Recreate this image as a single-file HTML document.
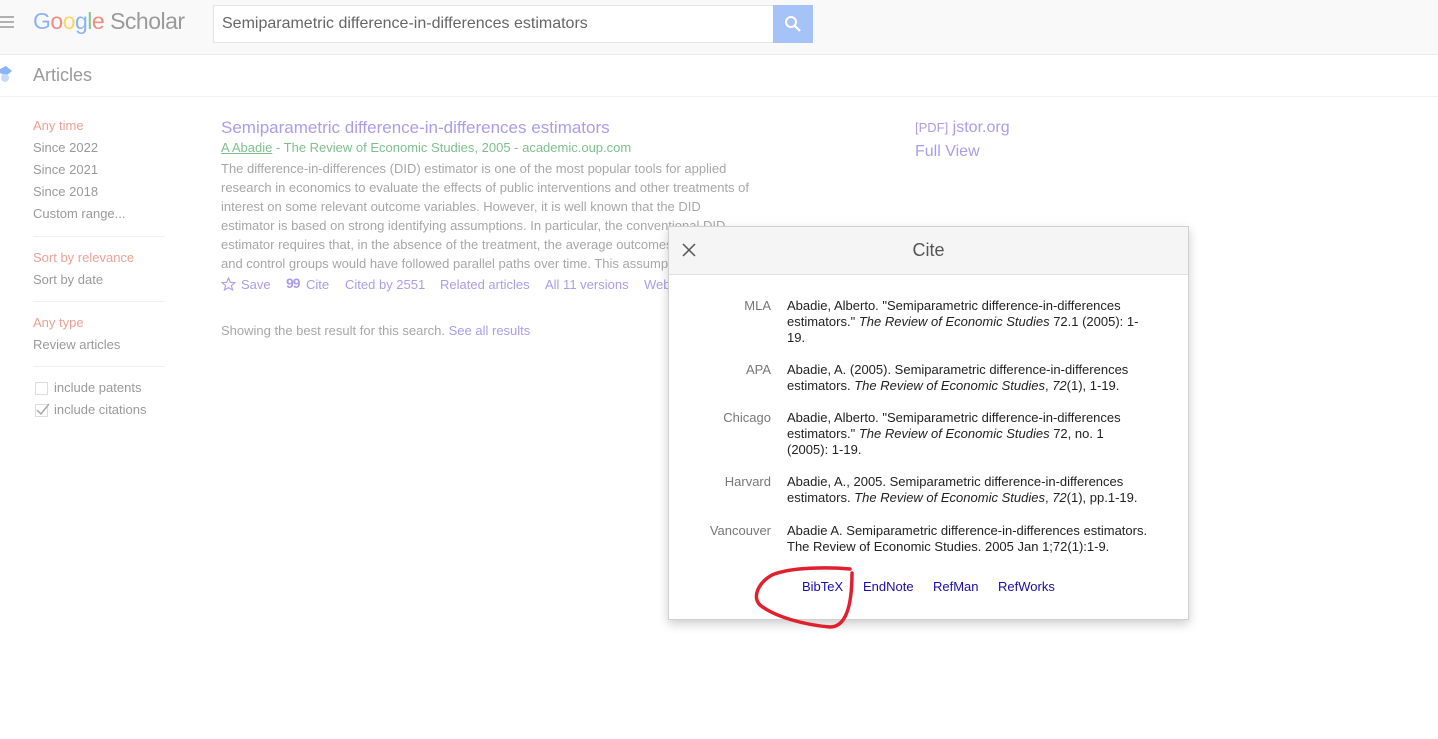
<!DOCTYPE html>
<html><head><meta charset="utf-8"><style>
*{margin:0;padding:0;box-sizing:border-box}
body{width:1438px;height:739px;overflow:hidden;background:#fff;font-family:"Liberation Sans",Arial,sans-serif;position:relative;font-size:13px}
.a{position:absolute;white-space:nowrap}
.hdr{position:absolute;left:0;top:0;width:1438px;height:55px;background:#f9f9f9;border-bottom:1px solid #ececec}
.sub{position:absolute;left:0;top:55px;width:1438px;height:42px;border-bottom:1px solid #f0f0f0}
.side{color:#9a9a9a;font-size:13px}
.red{color:#eda196}
.hr{position:absolute;left:33px;width:132px;height:1px;background:#f0f0f0}
.snip{position:absolute;left:221px;top:159px;width:531px;color:#a7a7a7;line-height:19px;font-size:13px}
.lk{color:#a99ee9}
.dlg{position:absolute;left:668px;top:226px;width:521px;height:394px;background:#fff;border:1px solid #d0d0d0;box-shadow:0 4px 10px rgba(0,0,0,.2)}
.dh{height:48px;background:#f5f5f5;border-bottom:1px solid #e0e0e0;text-align:center;font-size:18px;color:#555;line-height:46px}
.row{position:absolute;left:0;width:521px;line-height:16px;color:#222;font-size:13px}
.row .l{position:absolute;left:0;width:102px;text-align:right;color:#777}
.row .t{position:absolute;left:118px;width:354px}
.bl{position:absolute;top:352px;color:#1a0dab;font-size:13px}
</style></head><body>
<div class="hdr"></div>
<svg style="position:absolute;left:0;top:16px" width="14" height="12"><path d="M0 1H14M0 6H14M0 11H14" stroke="#999" stroke-width="1.5"/></svg>
<div class="a" style="left:33px;top:8px;font-size:23px;letter-spacing:-0.5px"><span style="color:#8ab4f8">G</span><span style="color:#f28b82">o</span><span style="color:#fdd663">o</span><span style="color:#8ab4f8">g</span><span style="color:#81c995">l</span><span style="color:#f28b82">e</span><span style="color:#9a9a9a"> Scholar</span></div>
<div style="position:absolute;left:213px;top:5px;width:561px;height:38px;background:#fff;border:1px solid #e5e5e5"></div>
<div class="a" style="left:222px;top:15px;font-size:16px;color:#666">Semiparametric difference-in-differences estimators</div>
<div style="position:absolute;left:773px;top:5px;width:40px;height:38px;background:#a6c3f7"></div>
<svg style="position:absolute;left:784px;top:15px" width="18" height="18"><circle cx="7" cy="7" r="5" fill="none" stroke="#fff" stroke-width="2"/><line x1="11" y1="11" x2="16" y2="16" stroke="#fff" stroke-width="2.2"/></svg>
<div class="sub"></div>
<svg style="position:absolute;left:0;top:66px" width="14" height="18"><polygon points="0,3 6,0 12,5 6,10 0,7" fill="#8ab4f8"/><circle cx="5" cy="12" r="4" fill="#c6dafc"/></svg>
<div class="a" style="left:33px;top:65px;font-size:18px;color:#9a9a9a">Articles</div>

<div class="a side red" style="left:33px;top:118px">Any time</div>
<div class="a side" style="left:33px;top:140px">Since 2022</div>
<div class="a side" style="left:33px;top:162px">Since 2021</div>
<div class="a side" style="left:33px;top:184px">Since 2018</div>
<div class="a side" style="left:33px;top:206px">Custom range...</div>
<div class="hr" style="top:236px"></div>
<div class="a side red" style="left:33px;top:250px">Sort by relevance</div>
<div class="a side" style="left:33px;top:272px">Sort by date</div>
<div class="hr" style="top:301px"></div>
<div class="a side red" style="left:33px;top:315px">Any type</div>
<div class="a side" style="left:33px;top:337px">Review articles</div>
<div class="hr" style="top:366px"></div>
<div style="position:absolute;left:35px;top:382px;width:13px;height:13px;border:1px solid #ddd"></div>
<div class="a side" style="left:54px;top:380px">include patents</div>
<div style="position:absolute;left:35px;top:404px;width:13px;height:13px;border:1px solid #ddd"></div>
<svg style="position:absolute;left:35px;top:401px" width="16" height="16"><path d="M2 9L6 13L14 3" fill="none" stroke="#aaa" stroke-width="1.5"/></svg>
<div class="a side" style="left:54px;top:402px">include citations</div>

<div class="a" style="left:221px;top:118px;font-size:17px;color:#a99ee9">Semiparametric difference-in-differences estimators</div>
<div class="a" style="left:221px;top:140px;color:#7fbf8e"><u>A Abadie</u> - The Review of Economic Studies, 2005 - academic.oup.com</div>
<div class="snip">The difference-in-differences (DID) estimator is one of the most popular tools for applied research in economics to evaluate the effects of public interventions and other treatments of interest on some relevant outcome variables. However, it is well known that the DID estimator is based on strong identifying assumptions. In particular, the conventional DID estimator requires that, in the absence of the treatment, the average outcomes for treated and control groups would have followed parallel paths over time. This assumption</div>
<svg style="position:absolute;left:221px;top:277px" width="15" height="14"><polygon points="7.5,1 9.3,5.3 14,5.6 10.4,8.6 11.6,13 7.5,10.6 3.4,13 4.6,8.6 1,5.6 5.7,5.3" fill="none" stroke="#a99ee9" stroke-width="1.1"/></svg>
<div class="a lk" style="left:241px;top:277px">Save</div>
<div class="a lk" style="left:286px;top:275px;font-size:14px;font-weight:bold;letter-spacing:-1px">99</div>
<div class="a lk" style="left:306px;top:277px">Cite</div>
<div class="a lk" style="left:345px;top:277px">Cited by 2551</div>
<div class="a lk" style="left:440px;top:277px">Related articles</div>
<div class="a lk" style="left:545px;top:277px">All 11 versions</div>
<div class="a lk" style="left:644px;top:277px">Web of Science</div>
<div class="a" style="left:221px;top:323px;color:#a7a7a7">Showing the best result for this search. <span class="lk">See all results</span></div>
<div class="a" style="left:915px;top:119px;font-size:16px;color:#a99ee9"><span style="font-size:13px">[PDF]</span> jstor.org</div>
<div class="a" style="left:915px;top:143px;font-size:16px;color:#a99ee9">Full View</div>

<div class="dlg">
<div class="dh">Cite</div>
<svg style="position:absolute;left:13px;top:16px" width="14" height="14"><path d="M1 1L13 13M13 1L1 13" stroke="#555" stroke-width="1.5"/></svg>
<div class="row" style="top:71px"><span class="l">MLA</span><span class="t">Abadie, Alberto. "Semiparametric difference-in-differences estimators." <i>The Review of Economic Studies</i> 72.1 (2005): 1-19.</span></div>
<div class="row" style="top:135px"><span class="l">APA</span><span class="t">Abadie, A. (2005). Semiparametric difference-in-differences estimators. <i>The Review of Economic Studies</i>, <i>72</i>(1), 1-19.</span></div>
<div class="row" style="top:183px"><span class="l">Chicago</span><span class="t">Abadie, Alberto. "Semiparametric difference-in-differences estimators." <i>The Review of Economic Studies</i> 72, no. 1 (2005): 1-19.</span></div>
<div class="row" style="top:247px"><span class="l">Harvard</span><span class="t" style="width:362px">Abadie, A., 2005. Semiparametric difference-in-differences estimators. <i>The Review of Economic Studies</i>, <i>72</i>(1), pp.1-19.</span></div>
<div class="row" style="top:296px"><span class="l">Vancouver</span><span class="t" style="width:380px">Abadie A. Semiparametric difference-in-differences estimators. The Review of Economic Studies. 2005 Jan 1;72(1):1-9.</span></div>
<span class="bl" style="left:133px">BibTeX</span>
<span class="bl" style="left:194px">EndNote</span>
<span class="bl" style="left:264px">RefMan</span>
<span class="bl" style="left:329px">RefWorks</span>
</div>
<svg style="position:absolute;left:750px;top:565px" width="110" height="70"><path d="M100 4 C80 2 40 2 22 10 C8 18 2 32 10 40 C25 52 55 60 80 62 C96 62 102 40 102 8" fill="none" stroke="#e0202d" stroke-width="3.5" stroke-linecap="round"/></svg>
</body></html>
